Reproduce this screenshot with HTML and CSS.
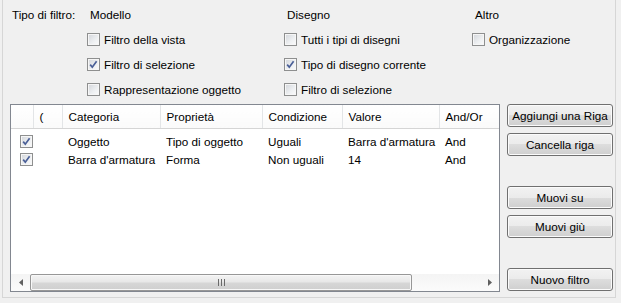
FILE: index.html
```html
<!DOCTYPE html>
<html lang="it">
<head>
    <meta charset="UTF-8">
    <title>Filtri</title>
    <link rel="stylesheet" href="styles.css">
</head>
<body>
    <div class="dialog">
        <div class="filter-types">
            <div class="ft-label">Tipo di filtro:</div>
            <div class="ft-head">Modello</div>
            <div class="ft-head">Disegno</div>
            <div class="ft-head">Altro</div>

            <div></div>
            <label class="cb"><span class="box"></span>Filtro della vista</label>
            <label class="cb"><span class="box"></span>Tutti i tipi di disegni</label>
            <label class="cb"><span class="box"></span>Organizzazione</label>

            <div></div>
            <label class="cb"><span class="box checked"><svg viewBox="0 0 11 11"><path d="M2.2 5.6 L4.3 8.2 L8.6 2.2"/></svg></span>Filtro di selezione</label>
            <label class="cb"><span class="box checked"><svg viewBox="0 0 11 11"><path d="M2.2 5.6 L4.3 8.2 L8.6 2.2"/></svg></span>Tipo di disegno corrente</label>
            <div></div>

            <div></div>
            <label class="cb"><span class="box"></span>Rappresentazione oggetto</label>
            <label class="cb"><span class="box"></span>Filtro di selezione</label>
            <div></div>
        </div>

        <div class="rules">
            <div class="grid-wrap">
                <div class="grid-scroll">
                    <table class="grid">
                        <colgroup>
                            <col style="width:22px">
                            <col style="width:29px">
                            <col style="width:98px">
                            <col style="width:102px">
                            <col style="width:80px">
                            <col style="width:97px">
                            <col>
                        </colgroup>
                        <thead>
                            <tr>
                                <th></th>
                                <th>(</th>
                                <th>Categoria</th>
                                <th>Proprietà</th>
                                <th>Condizione</th>
                                <th>Valore</th>
                                <th class="last">And/Or</th>
                            </tr>
                        </thead>
                        <tbody>
                            <tr class="spacer"><td colspan="7"></td></tr>
                            <tr>
                                <td class="chk"><span class="box checked"><svg viewBox="0 0 11 11"><path d="M2.2 5.6 L4.3 8.2 L8.6 2.2"/></svg></span></td>
                                <td></td>
                                <td>Oggetto</td>
                                <td>Tipo di oggetto</td>
                                <td>Uguali</td>
                                <td>Barra d'armatura</td>
                                <td>And</td>
                            </tr>
                            <tr>
                                <td class="chk"><span class="box checked"><svg viewBox="0 0 11 11"><path d="M2.2 5.6 L4.3 8.2 L8.6 2.2"/></svg></span></td>
                                <td></td>
                                <td>Barra d'armatura</td>
                                <td>Forma</td>
                                <td>Non uguali</td>
                                <td>14</td>
                                <td>And</td>
                            </tr>
                        </tbody>
                    </table>
                </div>
                <div class="hscroll">
                    <div class="arrow left"><svg viewBox="0 0 4 7"><path d="M4 0 L0 3.5 L4 7 Z"/></svg></div>
                    <div class="track">
                        <div class="thumb"><span class="grip"></span></div>
                    </div>
                    <div class="arrow right"><svg viewBox="0 0 4 7"><path d="M0 0 L4 3.5 L0 7 Z"/></svg></div>
                </div>
            </div>

            <div class="actions">
                <button class="btn">Aggiungi una Riga</button>
                <button class="btn near">Cancella riga</button>
                <button class="btn far">Muovi su</button>
                <button class="btn near">Muovi giù</button>
                <button class="btn far">Nuovo filtro</button>
            </div>
        </div>
    </div>
</body>
</html>
```

FILE: styles.css
```css
body {
    margin: 0;
    background-color: #f0f0f0;
    font-family: "Liberation Sans", Arial, sans-serif;
    font-size: 11.7px;
    color: #000;
}

.dialog {
    box-sizing: border-box;
    margin-left: 2px;
    width: 614px;
    height: 298px;
    padding: 0 2px 0 7px;
    border: 1px solid #d6d6d6;
    border-top: none;
}

/* top: filter type checkboxes */
.filter-types {
    display: grid;
    grid-template-columns: 75px 197px 188px 1fr;
    grid-auto-rows: 25px;
    padding: 2px 0 0 2px;
    align-items: center;
}

.ft-head {
    padding-left: 3px;
}

.cb {
    display: flex;
    align-items: center;
    white-space: nowrap;
}

.box {
    box-sizing: border-box;
    display: inline-block;
    width: 13px;
    height: 13px;
    margin-right: 4px;
    border: 1px solid #8e8f8f;
    background: linear-gradient(135deg, #d2d5da 0%, #eef0f2 60%, #fbfbfb 100%);
    box-shadow: inset 0 0 0 1px #f6f6f6;
    position: relative;
}

.box svg {
    position: absolute;
    left: 0;
    top: 0;
    width: 11px;
    height: 11px;
}

.box path {
    fill: none;
    stroke: #4a5f97;
    stroke-width: 1.7;
}

/* bottom: rule grid and buttons */
.rules {
    display: flex;
    gap: 7px;
    margin-top: 2px;
}

.grid-wrap {
    box-sizing: border-box;
    width: 490px;
    height: 188px;
    border: 1px solid #828790;
    background-color: #fff;
    display: flex;
    flex-direction: column;
}

.grid-scroll {
    flex: 1;
    overflow: hidden;
}

.grid {
    border-collapse: collapse;
    table-layout: fixed;
    width: 540px;
}

.grid th {
    height: 23px;
    padding: 0 0 0 6px;
    font-weight: normal;
    text-align: left;
    white-space: nowrap;
    border-right: 1px solid #e3e5e7;
    border-bottom: 1px solid #d5d5d5;
    background: linear-gradient(#ffffff, #fafafa);
}

.grid th.last {
    border-right: none;
}

.grid td {
    height: 18px;
    padding: 0 0 0 6px;
    white-space: nowrap;
    overflow: hidden;
}

.grid tr.spacer td {
    height: 3px;
}

.grid td.chk {
    padding-left: 9px;
}

.grid td.chk .box {
    display: block;
    margin: 0;
}

.hscroll {
    height: 17px;
    display: flex;
    background: linear-gradient(#f4f4f4, #fbfbfb);
}

.arrow {
    width: 19px;
    display: flex;
    align-items: center;
    justify-content: center;
}

.arrow svg {
    width: 4px;
    height: 7px;
    fill: #606060;
}

.track {
    flex: 1;
    display: flex;
}

.thumb {
    box-sizing: border-box;
    width: 382px;
    height: 17px;
    border: 1px solid #979797;
    border-radius: 2px;
    background: linear-gradient(#f3f3f3 0%, #e8e8e8 45%, #d6d6d6 55%, #cfcfcf 100%);
    box-shadow: inset 0 0 0 1px #f8f8f8;
    display: flex;
    align-items: center;
    justify-content: center;
}

.grip {
    width: 7px;
    height: 7px;
    background: repeating-linear-gradient(90deg, #6a6a6a 0 1px, transparent 1px 3px);
}

.actions {
    display: flex;
    flex-direction: column;
    width: 106px;
}

.btn {
    box-sizing: border-box;
    height: 23px;
    padding: 0;
    font-family: "Liberation Sans", Arial, sans-serif;
    font-size: 11.7px;
    color: #000;
    border: 1px solid #707070;
    border-radius: 3px;
    background: linear-gradient(#f2f2f2 0%, #ebebeb 50%, #dddddd 50%, #cfcfcf 100%);
    box-shadow: inset 0 0 0 1px #fbfbfb;
}

.btn.near {
    margin-top: 6px;
}

.btn.far {
    margin-top: 30px;
}
```
